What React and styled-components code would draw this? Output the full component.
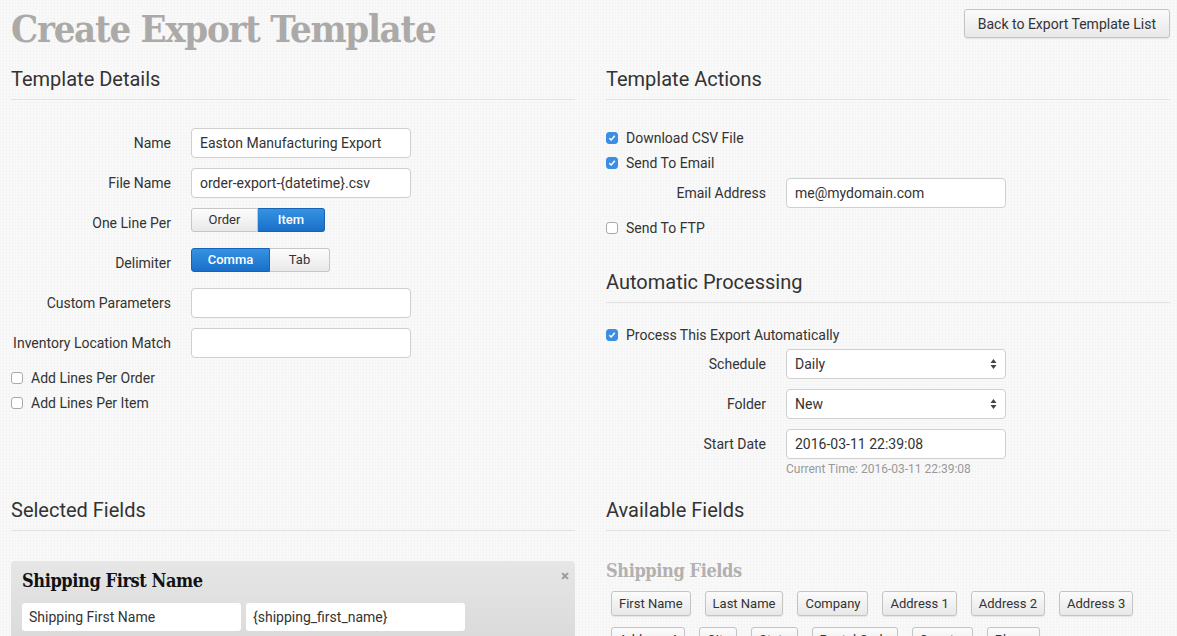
import React from 'react';
import styled, { createGlobalStyle } from 'styled-components';

const GlobalStyle = createGlobalStyle`
  html, body {
    margin: 0;
    padding: 0;
  }
  body {
    font-family: Roboto, "Liberation Sans", sans-serif;
    color: #333;
    background-color: #f9f9f9;
    background-image:
      linear-gradient(rgba(0, 0, 0, 0.012) 1px, transparent 1px),
      linear-gradient(90deg, rgba(0, 0, 0, 0.012) 1px, transparent 1px);
    background-size: 3px 3px;
  }
`;

const slab = `"Roboto Slab", "DejaVu Serif Condensed", "DejaVu Serif", serif`;

const Page = styled.div`
  padding: 0 7px 0 11px;
  height: 636px;
  overflow: hidden;
`;

const Header = styled.div`
  display: flex;
  justify-content: space-between;
  align-items: flex-start;
  height: 56px;
`;

const Title = styled.h1`
  margin: 0;
  font-family: ${slab};
  font-weight: 700;
  font-size: 38px;
  line-height: 58px;
  color: #acaaa8;
  letter-spacing: -1.3px;
`;

const Button = styled.button`
  font-family: Roboto, "Liberation Sans", sans-serif;
  font-size: ${p => (p.$small ? '13px' : '14px')};
  color: #333;
  height: ${p => (p.$small ? '25px' : '29px')};
  padding: 0 ${p => (p.$small ? '7px' : '13px')};
  border: 1px solid #c4c4c4;
  border-radius: 3px;
  background: linear-gradient(#fbfbfb, #e8e8e8);
  box-shadow: 0 1px 1px rgba(0, 0, 0, 0.08);
  cursor: pointer;
  white-space: nowrap;
`;

const BackButton = styled(Button)`
  margin-top: 9px;
`;

const Columns = styled.div`
  display: grid;
  grid-template-columns: 564px 564px;
  column-gap: 31px;
  margin-top: ${p => p.$top || '0px'};
`;

const SectionTitle = styled.h3`
  margin: ${p => p.$top || '0px'} 0 0;
  padding: 11px 0 8px;
  font-size: 20px;
  line-height: 24px;
  font-weight: 400;
  color: #333;
  border-bottom: 1px solid #e2e2e2;
`;

const Stack = styled.div`
  display: flex;
  flex-direction: column;
  gap: ${p => p.$gap || '0px'};
  margin-top: ${p => p.$top || '0px'};
`;

const Row = styled.div`
  display: flex;
  align-items: flex-start;
  gap: 20px;
  margin-top: ${p => p.$top || '0px'};
`;

const Label = styled.label`
  width: 160px;
  flex: none;
  text-align: right;
  font-size: 14px;
  line-height: 30px;
  color: #333;
`;

const Input = styled.div`
  box-sizing: border-box;
  width: 220px;
  height: 30px;
  padding: 0 8px;
  border: 1px solid #cfcfcf;
  border-radius: 4px;
  background: #fff;
  font-size: 14px;
  line-height: 28px;
  color: #333;
  white-space: nowrap;
  overflow: hidden;
`;

const Select = styled(Input)`
  display: flex;
  justify-content: space-between;
  align-items: center;
  line-height: normal;
`;

const Hint = styled.div`
  margin: 3px 0 0 180px;
  font-size: 12px;
  line-height: 14px;
  color: #999;
`;

const Group = styled.div`
  display: flex;
`;

const Segment = styled.div`
  height: 24px;
  box-sizing: border-box;
  width: ${p => p.$w};
  font-size: 13px;
  line-height: 22px;
  font-weight: ${p => (p.$active ? 500 : 400)};
  color: ${p => (p.$active ? '#fff' : '#333')};
  background: ${p => (p.$active ? 'linear-gradient(#3592e2, #1a70c9)' : 'linear-gradient(#fdfdfd, #e9e9e9)')};
  border: 1px solid ${p => (p.$active ? '#1864b3' : '#c6c6c6')};
  text-align: center;
  &:first-child {
    border-radius: 3px 0 0 3px;
  }
  &:last-child {
    border-radius: 0 3px 3px 0;
  }
  & + & {
    border-left: none;
  }
`;

const Check = styled.div`
  display: flex;
  align-items: center;
  gap: 8px;
  height: 25px;
  font-size: 14px;
  color: #333;
  margin-top: ${p => p.$top || '0px'};
`;

const Box = styled.span`
  box-sizing: border-box;
  width: 12px;
  height: 12px;
  border-radius: 3px;
  border: 1px solid ${p => (p.$on ? '#3b8ee3' : '#a9a9a9')};
  background: ${p => (p.$on ? '#3b8ee3' : '#fff')};
  display: flex;
  align-items: center;
  justify-content: center;
`;

const Card = styled.div`
  margin-top: 30px;
  padding: 9px 11px 12px;
  border-radius: 4px;
  background: linear-gradient(#e6e6e6, #d4d4d4);
  height: 100px;
`;

const CardHead = styled.div`
  display: flex;
  justify-content: space-between;
  align-items: flex-start;
`;

const CardTitle = styled.div`
  font-family: ${slab};
  font-weight: 700;
  font-size: 18px;
  line-height: 22px;
  letter-spacing: -0.4px;
  color: ${p => (p.$muted ? '#b3b1af' : '#111')};
`;

const Close = styled.span`
  font-size: 15px;
  line-height: 10px;
  font-weight: 700;
  color: #9a9a9a;
  margin: 1px -5px 0 0;
`;

const CardInputs = styled.div`
  display: flex;
  gap: 5px;
  margin-top: 11px;
`;

const CardInput = styled.div`
  width: 219px;
  height: 28px;
  box-sizing: border-box;
  padding: 0 7px;
  background: #fff;
  border-radius: 3px;
  font-size: 14px;
  line-height: 28px;
  color: #333;
`;

const Pool = styled.div`
  margin-top: 29px;
`;

const FieldButtons = styled.div`
  display: flex;
  flex-wrap: wrap;
  column-gap: 14px;
  row-gap: 11px;
  padding-left: 5px;
  margin-top: 9px;
`;

const Arrows = () => (
  <svg width="7" height="12" viewBox="0 0 7 12">
    <path d="M3.5 1 L6.5 5 L0.5 5 Z M3.5 11 L6.5 7 L0.5 7 Z" fill="#444" />
  </svg>
);

const CheckBox = ({ on, children, top }) => (
  <Check $top={top}>
    <Box $on={on}>
      {on && (
        <svg width="8" height="8" viewBox="0 0 8 8">
          <path d="M1.3 4.2 L3.2 6 L6.8 1.8" stroke="#fff" strokeWidth="1.5" fill="none" />
        </svg>
      )}
    </Box>
    {children}
  </Check>
);

const shippingFields = [
  'First Name', 'Last Name', 'Company', 'Address 1', 'Address 2', 'Address 3',
  'Address 4', 'City', 'State', 'Postal Code', 'Country', 'Phone',
];

export default function App() {
  return (
    <>
      <GlobalStyle />
      <Page>
        <Header>
          <Title>Create Export Template</Title>
          <BackButton>Back to Export Template List</BackButton>
        </Header>

        <Columns>
          <div>
            <SectionTitle>Template Details</SectionTitle>
            <Stack $gap="10px" $top="28px">
              <Row>
                <Label>Name</Label>
                <Input>Easton Manufacturing Export</Input>
              </Row>
              <Row>
                <Label>File Name</Label>
                <Input>order-export-{'{datetime}'}.csv</Input>
              </Row>
              <Row>
                <Label>One Line Per</Label>
                <Group>
                  <Segment $w="67px">Order</Segment>
                  <Segment $w="67px" $active>Item</Segment>
                </Group>
              </Row>
              <Row>
                <Label>Delimiter</Label>
                <Group>
                  <Segment $w="79px" $active>Comma</Segment>
                  <Segment $w="60px">Tab</Segment>
                </Group>
              </Row>
              <Row>
                <Label>Custom Parameters</Label>
                <Input />
              </Row>
              <Row>
                <Label>Inventory Location Match</Label>
                <Input />
              </Row>
            </Stack>
            <Stack $top="7px">
              <CheckBox>Add Lines Per Order</CheckBox>
              <CheckBox>Add Lines Per Item</CheckBox>
            </Stack>
          </div>

          <div>
            <SectionTitle>Template Actions</SectionTitle>
            <Stack $top="25px">
              <CheckBox on>Download CSV File</CheckBox>
              <CheckBox on>Send To Email</CheckBox>
              <Row $top="3px">
                <Label>Email Address</Label>
                <Input>me@mydomain.com</Input>
              </Row>
              <CheckBox top="7px">Send To FTP</CheckBox>
            </Stack>

            <SectionTitle $top="19px">Automatic Processing</SectionTitle>
            <Stack $top="19px">
              <CheckBox on>Process This Export Automatically</CheckBox>
              <Stack $gap="10px" $top="2px">
                <Row>
                  <Label>Schedule</Label>
                  <Select>Daily<Arrows /></Select>
                </Row>
                <Row>
                  <Label>Folder</Label>
                  <Select>New<Arrows /></Select>
                </Row>
                <Row>
                  <Label>Start Date</Label>
                  <Input>2016-03-11 22:39:08</Input>
                </Row>
              </Stack>
              <Hint>Current Time: 2016-03-11 22:39:08</Hint>
            </Stack>
          </div>
        </Columns>

        <Columns $top="11px">
          <div>
            <SectionTitle>Selected Fields</SectionTitle>
            <Card>
              <CardHead>
                <CardTitle>Shipping First Name</CardTitle>
                <Close>×</Close>
              </CardHead>
              <CardInputs>
                <CardInput>Shipping First Name</CardInput>
                <CardInput>{'{shipping_first_name}'}</CardInput>
              </CardInputs>
            </Card>
          </div>
          <div>
            <SectionTitle>Available Fields</SectionTitle>
            <Pool>
              <CardTitle $muted>Shipping Fields</CardTitle>
              <FieldButtons>
                {shippingFields.map(f => (
                  <Button $small key={f}>{f}</Button>
                ))}
              </FieldButtons>
            </Pool>
          </div>
        </Columns>
      </Page>
    </>
  );
}
